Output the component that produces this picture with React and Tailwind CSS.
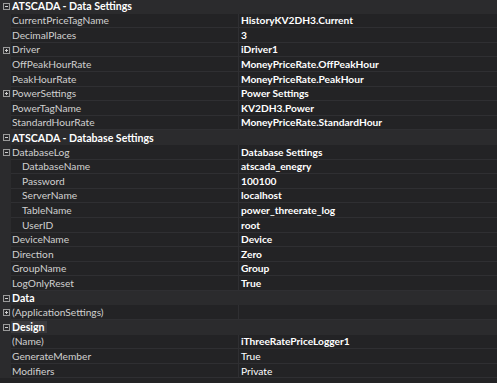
const ROWS = [
  { cat: 'ATSCADA - Data Settings' },
  { name: 'CurrentPriceTagName', value: 'HistoryKV2DH3.Current' },
  { name: 'DecimalPlaces', value: '3' },
  { name: 'Driver', value: 'iDriver1', expand: '+' },
  { name: 'OffPeakHourRate', value: 'MoneyPriceRate.OffPeakHour' },
  { name: 'PeakHourRate', value: 'MoneyPriceRate.PeakHour' },
  { name: 'PowerSettings', value: 'Power Settings', expand: '+' },
  { name: 'PowerTagName', value: 'KV2DH3.Power' },
  { name: 'StandardHourRate', value: 'MoneyPriceRate.StandardHour' },
  { cat: 'ATSCADA - Database Settings' },
  { name: 'DatabaseLog', value: 'Database Settings', expand: '-' },
  { name: 'DatabaseName', value: 'atscada_enegry', indent: true },
  { name: 'Password', value: '100100', indent: true },
  { name: 'ServerName', value: 'localhost', indent: true },
  { name: 'TableName', value: 'power_threerate_log', indent: true },
  { name: 'UserID', value: 'root', indent: true },
  { name: 'DeviceName', value: 'Device' },
  { name: 'Direction', value: 'Zero' },
  { name: 'GroupName', value: 'Group' },
  { name: 'LogOnlyReset', value: 'True' },
  { cat: 'Data' },
  { name: '(ApplicationSettings)', value: '', expand: '+' },
  { cat: 'Design', focus: true },
  { name: '(Name)', value: 'iThreeRatePriceLogger1' },
  { name: 'GenerateMember', value: 'True', plain: true },
  { name: 'Modifiers', value: 'Private', plain: true },
];

function Expander({ sign }) {
  return (
    <span className="relative block w-[7px] h-[7px] border border-[#9a9a9a]">
      <span className="absolute left-[1px] right-[1px] top-[2px] h-[1px] bg-[#d0d0d0]" />
      {sign === '+' && <span className="absolute top-[1px] bottom-[1px] left-[2px] w-[1px] bg-[#d0d0d0]" />}
    </span>
  );
}

export default function App() {
  return (
    <div
      className="w-[497px] h-[383px] overflow-hidden bg-[#232325] text-[10.2px]"
      style={{ fontFamily: 'Lato, "Open Sans", sans-serif' }}
    >
      <div className="-mt-[1px]">
        {ROWS.map((r, i) =>
          r.cat ? (
            <div key={i} className="flex items-center h-[14.6px] bg-[#2b2b2d]">
              <div className="w-[11px] flex justify-center pl-[1px]">
                <Expander sign="-" />
              </div>
              <span
                className={`font-bold text-[10.6px] text-white leading-[12px] pl-[1px] pr-[2px] ${r.focus ? 'bg-[#3a3a3d]' : ''}`}
              >
                {r.cat}
              </span>
            </div>
          ) : (
            <div key={i} className="flex h-[14.6px] bg-[#2b2b2d]">
              <div className="w-[11px] flex items-center justify-center pl-[1px]">
                {r.expand && <Expander sign={r.expand} />}
              </div>
              <div
                className={`w-[228px] flex items-center border-b border-r border-[#2f2f32] bg-[#232325] text-[#d0d0d0] ${r.indent ? 'pl-[11px]' : 'pl-[1px]'}`}
              >
                <span className="leading-none whitespace-nowrap">{r.name}</span>
              </div>
              <div className="flex-1 flex items-center border-b border-[#2f2f32] bg-[#232325] pl-[2px]">
                <span className={`leading-none whitespace-nowrap text-white ${r.plain ? 'text-[#e2e2e2]' : 'font-bold'}`}>
                  {r.value}
                </span>
              </div>
            </div>
          )
        )}
      </div>
    </div>
  );
}
